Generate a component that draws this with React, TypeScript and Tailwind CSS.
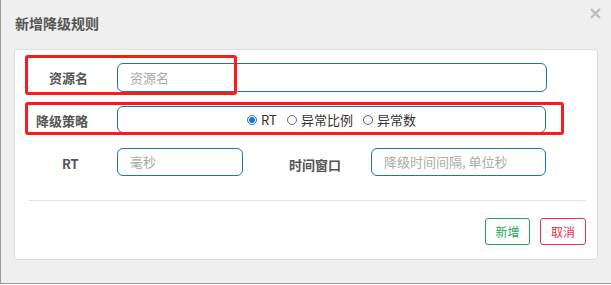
import React from "react"

const font = { fontFamily: '"Noto Sans CJK SC", "Noto Sans", sans-serif' }

const Radio = ({ checked, label }: { checked?: boolean; label: string }) => (
  <span className="inline-flex items-center gap-[4px]">
    {checked ? (
      <span className="w-[10px] h-[10px] rounded-full border border-[#1a73e8] flex items-center justify-center">
        <span className="w-[6px] h-[6px] rounded-full bg-[#1a73e8]" />
      </span>
    ) : (
      <span className="w-[10px] h-[10px] rounded-full border border-[#666] bg-white" />
    )}
    <span className="text-[13px] text-[#333] leading-none">{label}</span>
  </span>
)

export default function App() {
  return (
    <div
      className="relative w-[611px] h-[284px] bg-[#efefef] border-l border-b border-[#9a9a9a]"
      style={font}
    >
      <div className="flex items-start justify-between pl-[14px] pr-[10px]">
        <h4 className="pt-[13px] text-[14px] font-semibold text-[#555] leading-[20px]">新增降级规则</h4>
        <svg width="11" height="11" viewBox="0 0 11 11" className="mt-[8px]">
          <path d="M1 1 L10 10 M10 1 L1 10" stroke="#bdbdbd" strokeWidth="2.4" />
        </svg>
      </div>

      <div className="relative mt-[16px] ml-[13px] mr-[13px] h-[211px] bg-white border border-[#dcdcdc] rounded-[3px] pt-[13px]">
        {/* row 1 */}
        <div className="flex items-center h-[29px]">
          <label className="w-[102px] pl-[34px] text-[13px] font-bold text-[#555]">资源名</label>
          <div className="w-[430px] h-[29px] border border-[#1a75b5] rounded-[6px] flex items-center pl-[12px] text-[13px] text-[#aaa]">
            资源名
          </div>
        </div>

        {/* row 2 */}
        <div className="flex items-center h-[27px] mt-[14px]">
          <label className="w-[102px] pl-[21px] pt-[2px] text-[13px] font-bold text-[#555]">降级策略</label>
          <div className="w-[429px] h-[27px] border border-[#1a75b5] rounded-[6px] flex items-center justify-center gap-[10px]">
            <Radio checked label="RT" />
            <Radio label="异常比例" />
            <Radio label="异常数" />
          </div>
        </div>

        {/* row 3 */}
        <div className="flex items-center h-[28px] mt-[15px]">
          <label className="w-[102px] pl-[47px] pt-[3px] text-[13px] font-bold text-[#555]">RT</label>
          <div className="w-[126px] h-[28px] border border-[#1a75b5] rounded-[6px] flex items-center pl-[12px] text-[13px] text-[#aaa]">
            毫秒
          </div>
          <label className="w-[128px] pl-[46px] pt-[5px] text-[13px] font-bold text-[#555]">时间窗口</label>
          <div className="w-[175px] h-[28px] border border-[#1a75b5] rounded-[6px] flex items-center pl-[12px] text-[13px] text-[#aaa]">
            降级时间间隔, 单位秒
          </div>
        </div>

        <div className="ml-[14px] mr-[11px] mt-[24px] border-t border-[#e3e3e3]" />

        <div className="flex justify-end gap-[10px] mr-[11px] mt-[17px]">
          <button className="w-[45px] h-[27px] border border-[#1fa55a] rounded-[3px] text-[12px] text-[#1fa55a] bg-white">
            新增
          </button>
          <button className="w-[46px] h-[27px] border border-[#e8334a] rounded-[3px] text-[12px] text-[#e8334a] bg-white">
            取消
          </button>
        </div>

        {/* annotation boxes */}
        <div className="absolute left-[10px] top-[5px] w-[212px] h-[40px] border-[3px] border-[#ff1a1a] rounded-[3px]" />
        <div className="absolute left-[10px] top-[52px] w-[539px] h-[33px] border-[3px] border-[#ff1a1a] rounded-[3px]" />
      </div>
    </div>
  )
}
